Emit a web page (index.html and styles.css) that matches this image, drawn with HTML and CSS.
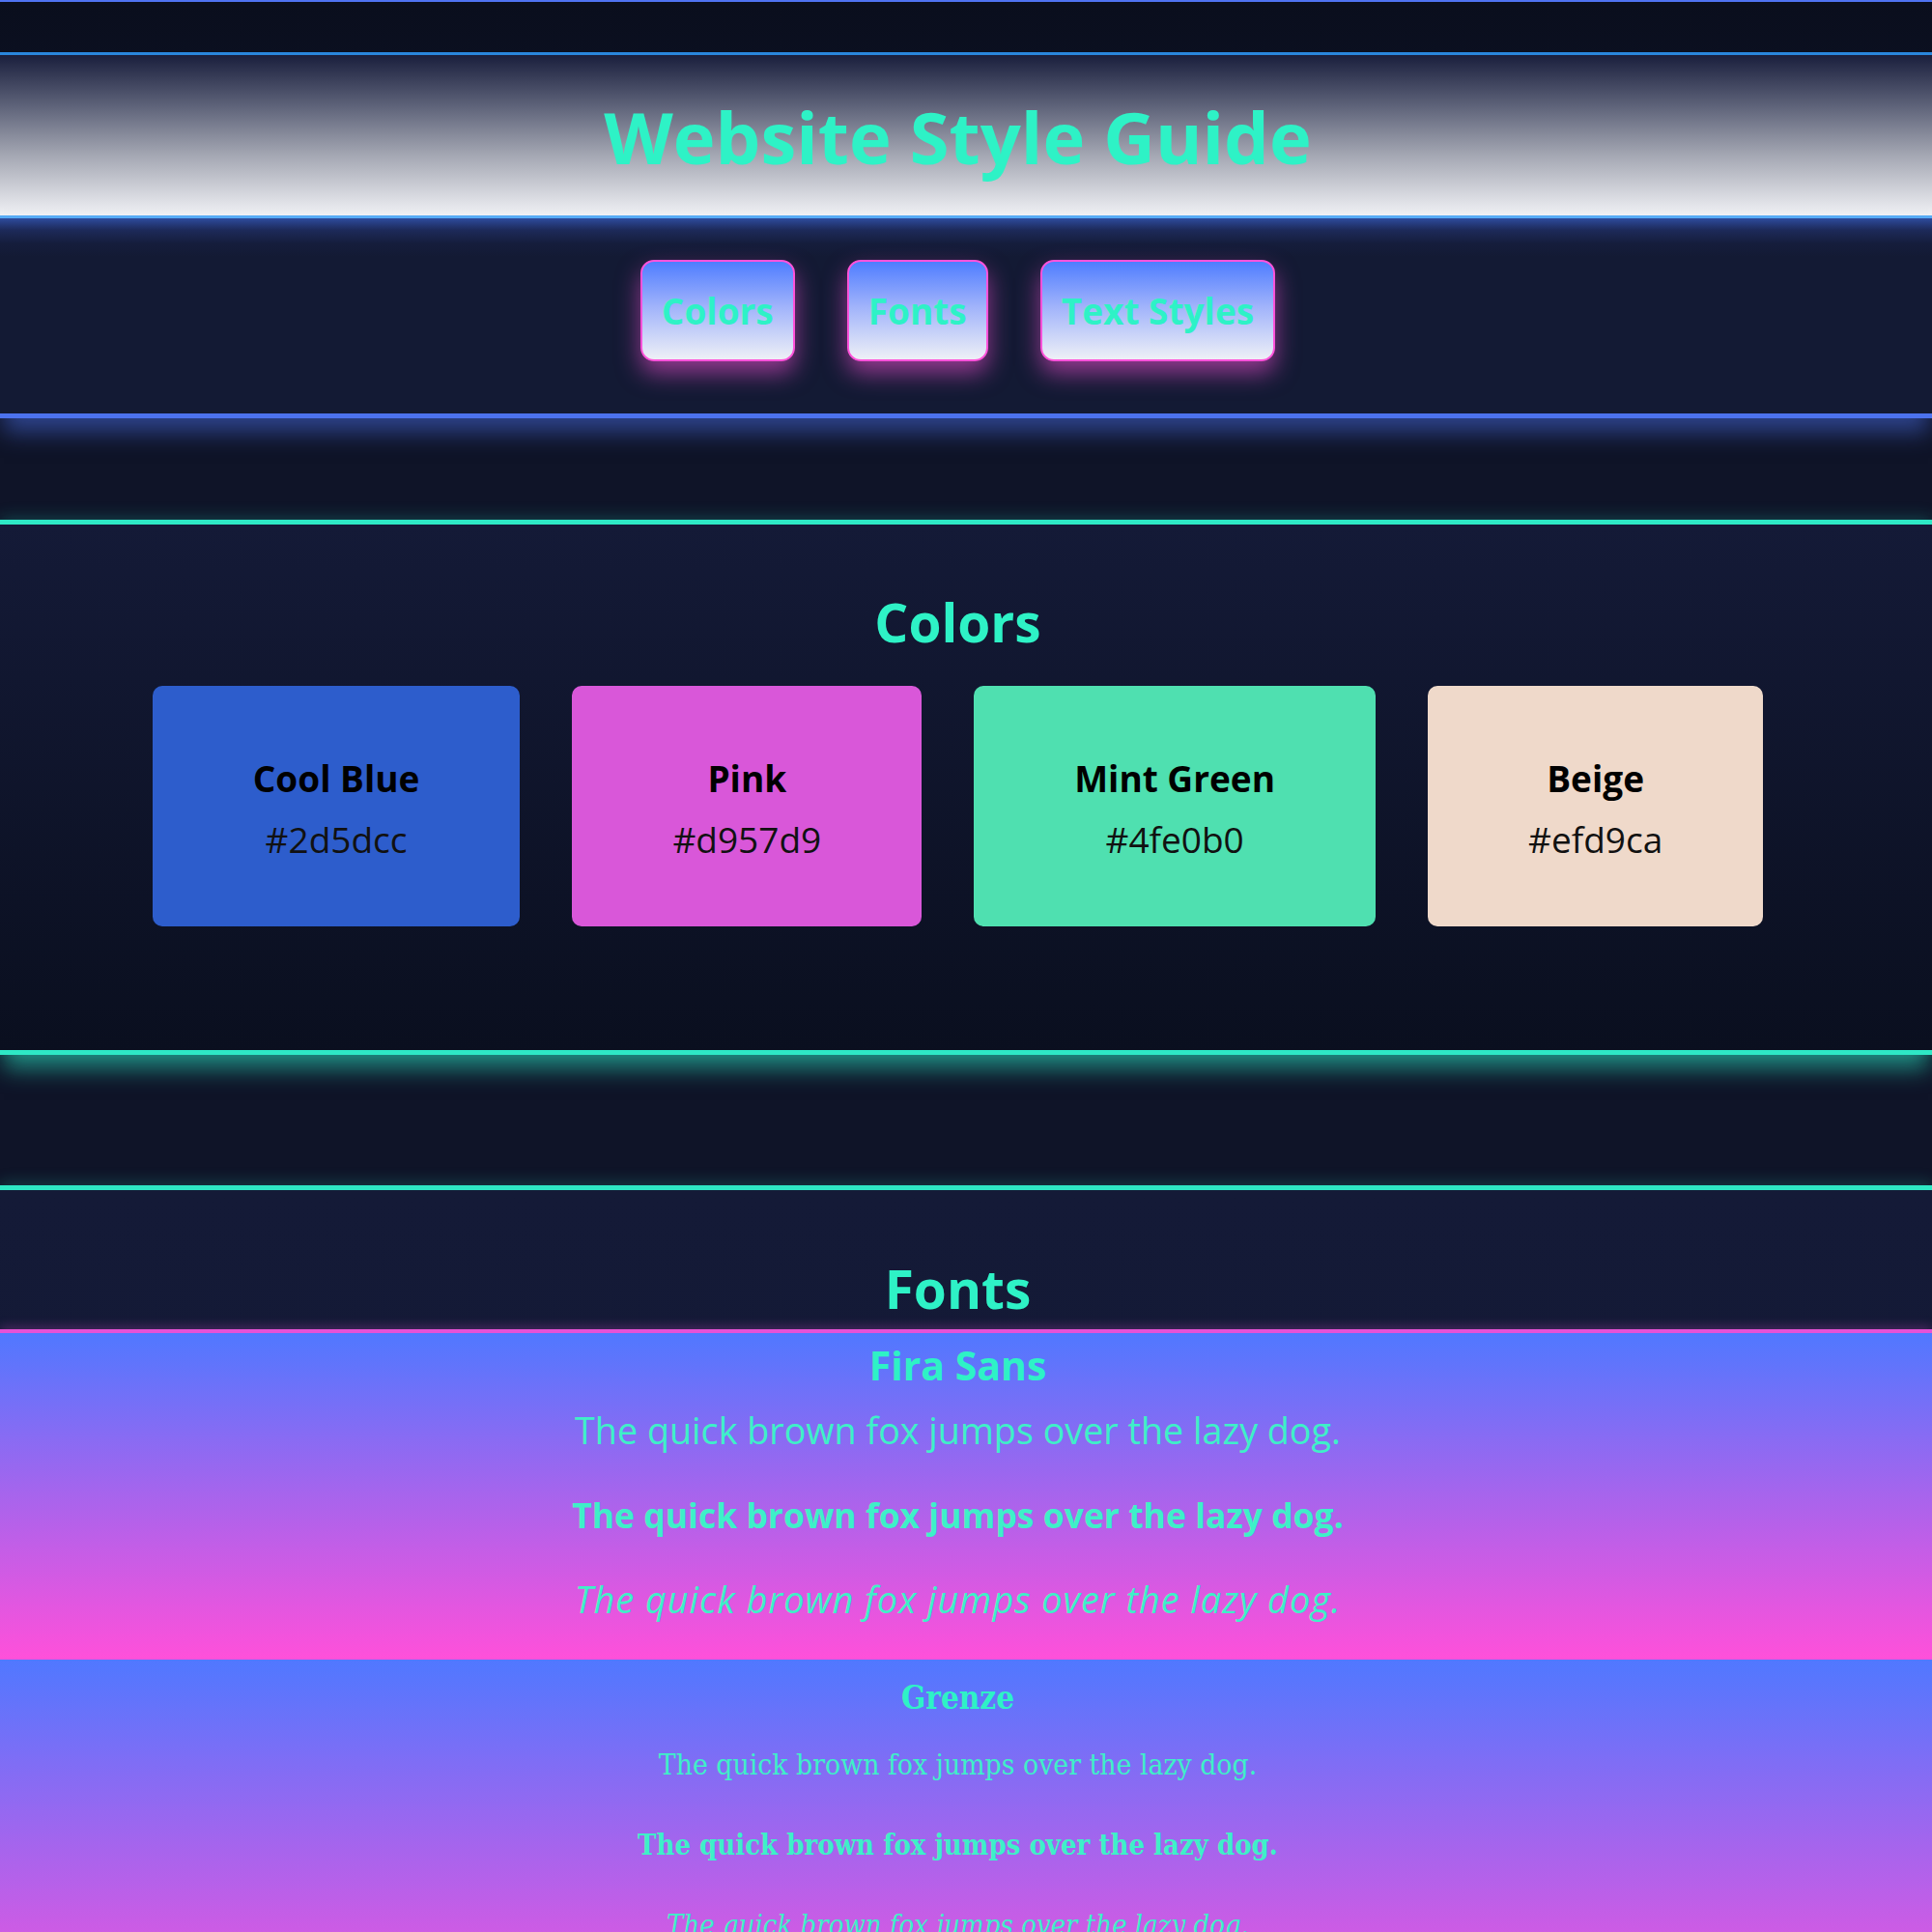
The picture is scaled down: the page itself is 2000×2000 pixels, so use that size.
FILE: index.html
```
<!DOCTYPE html>
<html lang="en">
<head>
<meta charset="utf-8">
<title>Website Style Guide</title>
<link rel="stylesheet" href="styles.css">
</head>
<body>
<header class="site-header">
  <div class="title-band">
    <h1 class="site-title">Website Style Guide</h1>
  </div>
</header>
<nav class="main-nav">
  <a class="nav-btn" href="#colors">Colors</a>
  <a class="nav-btn" href="#fonts">Fonts</a>
  <a class="nav-btn" href="#text-styles">Text Styles</a>
</nav>
<main>
  <section class="panel panel--colors" id="colors">
    <h2 class="panel-title">Colors</h2>
    <div class="swatches">
      <div class="swatch swatch--blue"><h3 class="swatch-name">Cool Blue</h3><p class="swatch-hex">#2d5dcc</p></div>
      <div class="swatch swatch--pink"><h3 class="swatch-name">Pink</h3><p class="swatch-hex">#d957d9</p></div>
      <div class="swatch swatch--mint"><h3 class="swatch-name">Mint Green</h3><p class="swatch-hex">#4fe0b0</p></div>
      <div class="swatch swatch--beige"><h3 class="swatch-name">Beige</h3><p class="swatch-hex">#efd9ca</p></div>
    </div>
  </section>
  <section class="panel panel--fonts" id="fonts">
    <h2 class="panel-title panel-title--fonts">Fonts</h2>
    <div class="font-list">
      <div class="font-sample font-sample--sans">
        <h3 class="font-name">Fira Sans</h3>
        <p class="font-line">The quick brown fox jumps over the lazy dog.</p>
        <p class="font-line font-line--bold">The quick brown fox jumps over the lazy dog.</p>
        <p class="font-line font-line--italic">The quick brown fox jumps over the lazy dog.</p>
      </div>
      <div class="font-sample font-sample--serif">
        <h3 class="font-name">Grenze</h3>
        <p class="font-line">The quick brown fox jumps over the lazy dog.</p>
        <p class="font-line font-line--bold">The quick brown fox jumps over the lazy dog.</p>
        <p class="font-line font-line--italic">The quick brown fox jumps over the lazy dog.</p>
      </div>
    </div>
  </section>
</main>
</body>
</html>
```
FILE: styles.css
```
html, body {
  margin: 0;
  padding: 0;
}

body {
  background: #0f1428;
  font-family: "Open Sans", "Noto Sans", sans-serif;
  color: #2ef0c4;
}

/* header */
.site-header {
  border-top: 2px solid #4f73f2;
  padding-top: 52px;
  background: linear-gradient(to bottom, #0a0e1d, #0e1429);
}

.title-band {
  border-top: 3px solid #2a86dc;
  border-bottom: 3px solid #58acf5;
  background: linear-gradient(to bottom, #1a1f3d 0%, #5a5f76 30%, #a3a6b2 62%, #f0f1f5 100%);
  padding: 35px 17px 31px 0;
  text-align: center;
}

.site-title {
  margin: 0;
  font-size: 74px;
  line-height: 100px;
  font-weight: 700;
  color: #2ef2c6;
}

/* nav */
.main-nav {
  display: flex;
  justify-content: center;
  gap: 54px;
  padding: 43px 17px 54px 0;
  background: linear-gradient(to bottom, #2e4b9d 0px, #1d2a5a 12px, #151d3c 26px, #131a34 40px, #131a34 100%);
  border-bottom: 5px solid #4c72ee;
  box-shadow: 0 18px 22px -4px rgba(76, 114, 238, 0.5);
  position: relative;
  z-index: 1;
}

.nav-btn {
  display: block;
  padding: 0 20px;
  height: 101px;
  line-height: 101px;
  border: 2px solid #ff52da;
  border-radius: 14px;
  background: linear-gradient(to bottom, #4f7dff 0%, #9fb2fb 45%, #eef0f6 100%);
  box-shadow: 0 12px 24px rgba(255, 82, 218, 0.55);
  color: #2ef2c6;
  font-size: 37px;
  font-weight: 700;
  text-decoration: none;
}

/* panels */
.panel {
  text-align: center;
  padding-right: 17px;
}

.panel-title {
  margin: 0;
  font-size: 55px;
  line-height: 75px;
  font-weight: 700;
  color: #2ef2c6;
}

.panel--colors {
  margin-top: 105px;
  border-top: 5px solid #2ee8c5;
  border-bottom: 5px solid #2ee8c5;
  padding-top: 63px;
  padding-bottom: 128px;
  background: linear-gradient(to bottom, #141a37, #0a0f1f);
  box-shadow: 0 -4px 14px rgba(46, 232, 197, 0.18), 0 18px 22px -4px rgba(46, 232, 197, 0.55);
  position: relative;
  z-index: 1;
}

.panel--colors .panel-title {
  margin-bottom: 29px;
}

.swatches {
  display: flex;
  justify-content: center;
  gap: 54px;
}

.swatch {
  padding: 71px 104px 65px;
  border-radius: 10px;
  color: #000;
}

.swatch--blue { background: #2d5dcc; }
.swatch--pink { background: #d957d9; }
.swatch--mint { background: #4fe0b0; }
.swatch--beige { background: #efd9ca; }

.swatch-name {
  margin: 0 0 13px;
  font-size: 37px;
  line-height: 50px;
  font-weight: 700;
}

.swatch-hex {
  margin: 0;
  font-size: 37px;
  line-height: 50px;
  font-weight: 400;
  color: #111;
}

.panel--fonts {
  margin-top: 135px;
  border-top: 5px solid #2ee8c5;
  padding-top: 64px;
  padding-right: 0;
  background: linear-gradient(to bottom, #141a37, #121833);
  box-shadow: 0 -4px 14px rgba(46, 232, 197, 0.18);
}

.panel-title--fonts {
  margin-bottom: 5px;
  padding-right: 17px;
}

.font-list {
  border-top: 4px solid #e552d6;
  box-shadow: 0 -3px 10px rgba(229, 82, 214, 0.25);
}

.font-sample {
  background: linear-gradient(to bottom, #5078ff, #ff50da);
  padding-right: 17px;
  color: #3ef0c8;
}

.font-name {
  margin: 0;
  font-weight: 700;
  color: #2ef2c6;
}

.font-line {
  margin: 0;
}

.font-line--bold {
  font-weight: 700;
}

.font-line--italic {
  font-style: italic;
}

.font-sample--sans {
  padding-top: 5px;
  height: 333px;
}

.font-sample--sans .font-name {
  font-size: 41px;
  line-height: 56px;
  margin-bottom: 15px;
}

.font-sample--sans .font-line {
  font-size: 37.7px;
  line-height: 50px;
  margin-bottom: 37px;
}

.font-sample--sans .font-line--bold {
  font-size: 35.5px;
}

.font-sample--sans .font-line--italic {
  font-size: 38px;
  letter-spacing: 0.9px;
}

.font-sample--serif {
  padding-top: 18px;
  padding-bottom: 60px;
  font-family: "DejaVu Serif Condensed", "DejaVu Serif", serif;
  font-stretch: condensed;
}

.font-sample--serif .font-name {
  font-size: 33px;
  line-height: 44px;
  margin-bottom: 25px;
}

.font-sample--serif .font-line {
  font-size: 29.8px;
  line-height: 44px;
  margin-bottom: 39px;
}

.font-sample--serif .font-line--bold {
  font-size: 29px;
}

.font-sample--serif .font-line--italic {
  font-size: 29px;
}
```
